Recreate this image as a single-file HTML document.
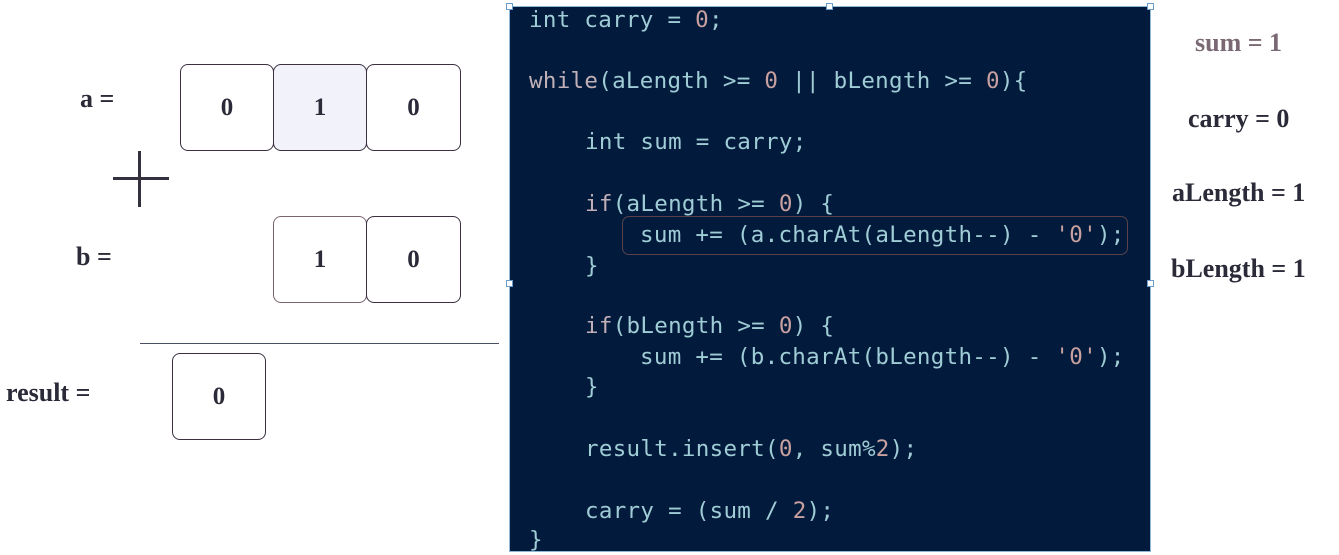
<!DOCTYPE html>
<html><head><meta charset="utf-8"><style>
body{margin:0;width:1339px;height:552px;background:#fff;position:relative;overflow:hidden;font-family:"Liberation Serif",serif}
.lbl{position:absolute;font-weight:bold;font-size:26px;color:#2a2a38;line-height:30px;white-space:nowrap}
.box{position:absolute;border:1.5px solid #3a3040;border-radius:8px;box-sizing:border-box;font-weight:bold;font-size:25px;color:#2a2a38;display:flex;align-items:center;justify-content:center}
#code{position:absolute;left:509px;top:6px;width:642px;height:546px;background:#021b3c;border:1px solid #8fb8d8;box-sizing:border-box}
.ln{position:absolute;font-family:"DejaVu Sans Mono","Liberation Mono",monospace;font-size:22.5px;line-height:30px;color:#a0ccd6;white-space:pre;letter-spacing:0.3px}
.n{color:#c9a0a0}.k{color:#c2b0b8}
.h{position:absolute;width:7px;height:7px;border:1px solid #6a9ccc;background:#fff;box-sizing:border-box}
</style></head><body>
<div class="lbl" style="left:80px;top:84px">a =</div>
<div class="lbl" style="left:76px;top:242px">b =</div>
<div class="lbl" style="left:6px;top:378px">result =</div>
<div class="box" style="left:180px;top:64px;width:94px;height:87px">0</div>
<div class="box" style="left:273px;top:64px;width:94px;height:87px;background:#f2f3fa">1</div>
<div class="box" style="left:366px;top:64px;width:95px;height:87px">0</div>
<div class="box" style="left:273px;top:216px;width:94px;height:87px;border-color:#7a6470">1</div>
<div class="box" style="left:366px;top:216px;width:95px;height:87px">0</div>
<div class="box" style="left:172px;top:353px;width:94px;height:87px">0</div>
<div style="position:absolute;left:138px;top:151px;width:3px;height:56px;background:#34303e"></div>
<div style="position:absolute;left:113px;top:177px;width:56px;height:2.5px;background:#34303e"></div>
<div style="position:absolute;left:140px;top:343px;width:359px;height:1px;background:#4a5060"></div>
<div id="code"></div>
<div class="h" style="left:506px;top:3px"></div><div class="h" style="left:826px;top:3px"></div><div class="h" style="left:1147px;top:3px"></div>
<div class="h" style="left:506px;top:280px"></div><div class="h" style="left:1147px;top:280px"></div>
<div style="position:absolute;left:622px;top:216px;width:506px;height:39px;border:1.5px solid #5a4248;border-radius:7px;box-sizing:border-box"></div>
<div class="ln" style="left:529px;top:5px">int carry = <span class="n">0</span>;</div>
<div class="ln" style="left:529px;top:66px"><span class="k">while</span>(aLength &gt;= <span class="n">0</span> || bLength &gt;= <span class="n">0</span>){</div>
<div class="ln" style="left:585px;top:127px">int sum = carry;</div>
<div class="ln" style="left:585px;top:189px"><span class="k">if</span>(aLength &gt;= <span class="n">0</span>) {</div>
<div class="ln" style="left:640px;top:220px">sum += (a.charAt(aLength--) - <span class="n">'0'</span>);</div>
<div class="ln" style="left:585px;top:251px">}</div>
<div class="ln" style="left:585px;top:311px"><span class="k">if</span>(bLength &gt;= <span class="n">0</span>) {</div>
<div class="ln" style="left:640px;top:342px">sum += (b.charAt(bLength--) - <span class="n">'0'</span>);</div>
<div class="ln" style="left:585px;top:372px">}</div>
<div class="ln" style="left:585px;top:434px">result.insert(<span class="n">0</span>, sum%<span class="n">2</span>);</div>
<div class="ln" style="left:585px;top:496px">carry = (sum / <span class="n">2</span>);</div>
<div class="ln" style="left:529px;top:525px">}</div>
<div class="lbl" style="left:1195px;top:28px;color:#7a6872">sum = 1</div>
<div class="lbl" style="left:1188px;top:104px">carry = 0</div>
<div class="lbl" style="left:1172px;top:178px">aLength = 1</div>
<div class="lbl" style="left:1171px;top:254px">bLength = 1</div>
</body></html>
